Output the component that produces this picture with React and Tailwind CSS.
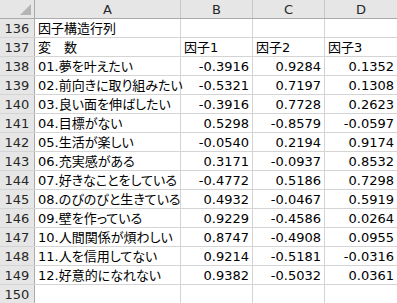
const ROWS = [
  { n: 136, a: '因子構造行列' },
  { n: 137, a: '変　数', b: '因子1', c: '因子2', d: '因子3', head: true },
  { n: 138, a: '01.夢を叶えたい', b: '-0.3916', c: '0.9284', d: '0.1352' },
  { n: 139, a: '02.前向きに取り組みたい', b: '-0.5321', c: '0.7197', d: '0.1308' },
  { n: 140, a: '03.良い面を伸ばしたい', b: '-0.3916', c: '0.7728', d: '0.2623' },
  { n: 141, a: '04.目標がない', b: '0.5298', c: '-0.8579', d: '-0.0597' },
  { n: 142, a: '05.生活が楽しい', b: '-0.0540', c: '0.2194', d: '0.9174' },
  { n: 143, a: '06.充実感がある', b: '0.3171', c: '-0.0937', d: '0.8532' },
  { n: 144, a: '07.好きなことをしている', b: '-0.4772', c: '0.5186', d: '0.7298' },
  { n: 145, a: '08.のびのびと生きている', b: '0.4932', c: '-0.0467', d: '0.5919' },
  { n: 146, a: '09.壁を作っている', b: '0.9229', c: '-0.4586', d: '0.0264' },
  { n: 147, a: '10.人間関係が煩わしい', b: '0.8747', c: '-0.4908', d: '0.0955' },
  { n: 148, a: '11.人を信用してない', b: '0.9214', c: '-0.5181', d: '-0.0316' },
  { n: 149, a: '12.好意的になれない', b: '0.9382', c: '-0.5032', d: '0.0361' },
  { n: 150, a: '' },
]

const font = "font-['DejaVu_Sans','Noto_Sans_CJK_JP',sans-serif]"

function ValueCell({ value, head, w }) {
  return (
    <div className={`${w} h-full shrink-0 border-r border-[#d4d4d4] flex items-center ${head ? 'justify-start pl-[3px]' : 'justify-end pr-[3px]'} [font-feature-settings:'palt']`}>
      {value}
    </div>
  )
}

export default function App() {
  return (
    <div className={`w-[397px] h-[303px] overflow-hidden bg-white text-[13px] leading-none text-black ${font}`}>
      <div className="flex h-[19px] bg-[#e6e6e6] border-b border-[#ababab] text-[#262626]">
        <div className="w-[35px] h-full shrink-0 border-r border-[#ababab] relative">
          <svg className="absolute right-[3px] bottom-[3px]" width="11" height="11" viewBox="0 0 11 11">
            <polygon points="11,0 11,11 0,11" fill="#b4b4b4" />
          </svg>
        </div>
        <div className="w-[146px] h-full shrink-0 border-r border-[#c6c6c6] flex items-center justify-center">A</div>
        <div className="w-[72px] h-full shrink-0 border-r border-[#c6c6c6] flex items-center justify-center">B</div>
        <div className="w-[72px] h-full shrink-0 border-r border-[#c6c6c6] flex items-center justify-center">C</div>
        <div className="flex-1 h-full flex items-center justify-center">D</div>
      </div>
      {ROWS.map((r) => (
        <div key={r.n} className="flex h-[19px] border-b border-[#d4d4d4]">
          <div className="w-[35px] h-full shrink-0 bg-[#e6e6e6] border-r border-[#ababab] flex items-center justify-center text-[#262626] relative">
            {r.n}
            {r.n === 150 && <span className="absolute right-[-1px] bottom-[-2px] w-[2px] h-[2px] bg-[#217346]" />}
          </div>
          <div className="w-[146px] h-full shrink-0 border-r border-[#d4d4d4] flex items-center pl-[3px] whitespace-nowrap [font-feature-settings:'palt']">
            {r.a}
          </div>
          <ValueCell w="w-[72px]" value={r.b} head={r.head} />
          <ValueCell w="w-[72px]" value={r.c} head={r.head} />
          <div className={`flex-1 h-full flex items-center ${r.head ? 'justify-start pl-[3px]' : 'justify-end pr-[3px]'} [font-feature-settings:'palt']`}>
            {r.d}
          </div>
        </div>
      ))}
    </div>
  )
}
